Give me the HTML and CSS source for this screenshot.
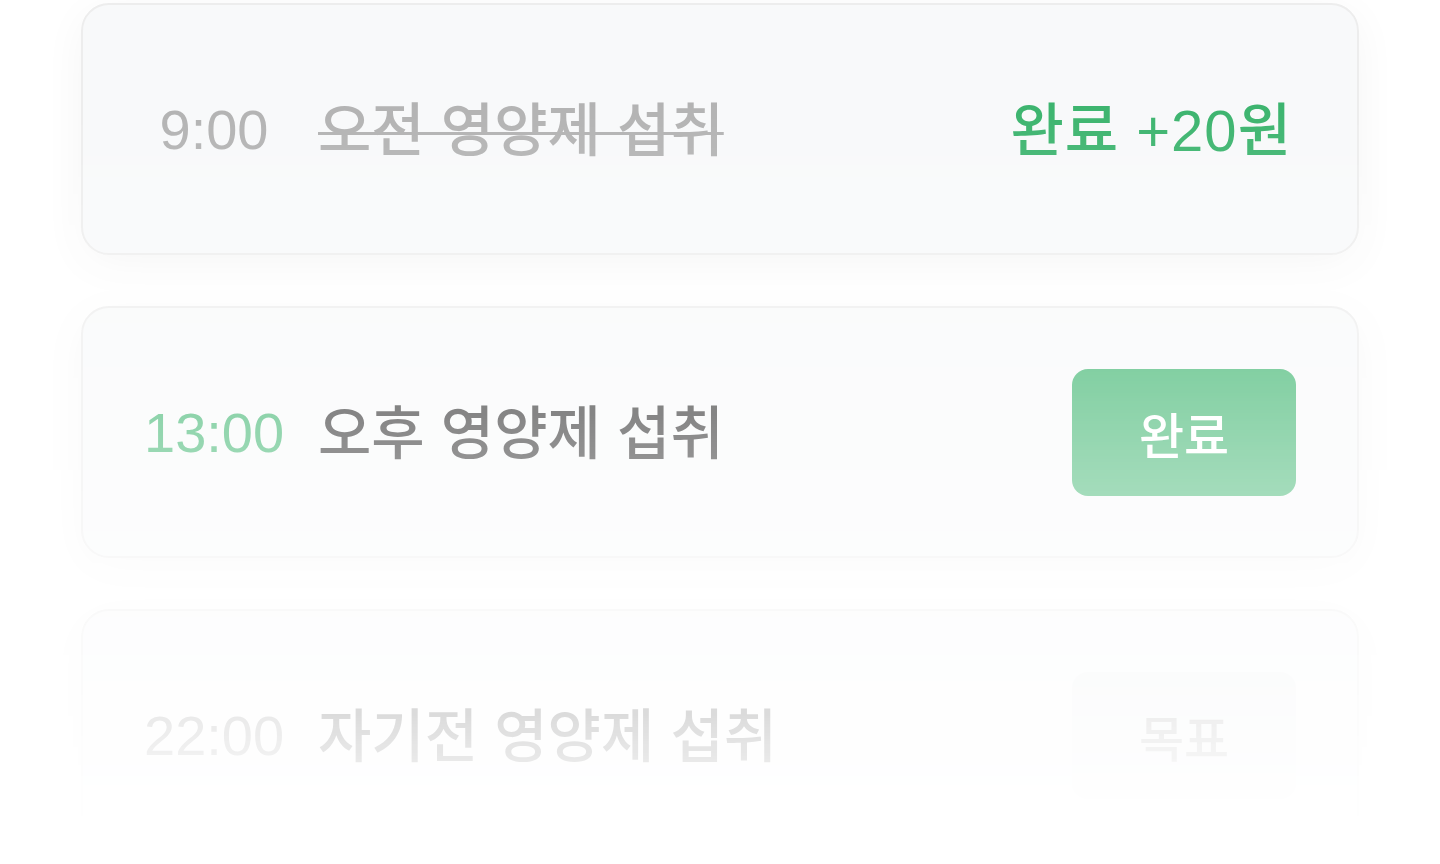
FILE: index.html
```html
<!DOCTYPE html>
<html lang="ko">
<head>
<meta charset="utf-8">
<title>영양제 체크리스트</title>
<link rel="stylesheet" href="styles.css">
</head>
<body>
<div class="list">
  <div class="card done">
    <span class="time">9:00</span>
    <span class="title">오전 영양제 섭취</span>
    <span class="reward">완료 +20원</span>
  </div>
  <div class="card current">
    <span class="time">13:00</span>
    <span class="title">오후 영양제 섭취</span>
    <button class="btn btn-done">완료</button>
  </div>
  <div class="card upcoming">
    <span class="time">22:00</span>
    <span class="title">자기전 영양제 섭취</span>
    <button class="btn btn-goal">목표</button>
  </div>
</div>
</body>
</html>
```
FILE: styles.css
```css
html, body {
  margin: 0;
  padding: 0;
  background: #ffffff;
  height: 100%;
  overflow: hidden;
}
body {
  font-family: "Liberation Sans", "Noto Sans CJK KR", sans-serif;
}
.list {
  display: flex;
  flex-direction: column;
  gap: 51px;
  padding: 3px 81px 0;
  -webkit-mask-image: linear-gradient(to bottom, #000 103px, transparent 838px);
  mask-image: linear-gradient(to bottom, #000 103px, transparent 838px);
}
.card {
  box-sizing: border-box;
  height: 252px;
  flex: none;
  display: flex;
  align-items: center;
  padding: 0 61px;
  background: #f8f9fa;
  border: 2px solid #ededed;
  border-radius: 28px;
  box-shadow: 0 10px 44px rgba(0, 0, 0, 0.045);
}
.time {
  width: 140px;
  flex: none;
  text-align: center;
  font-size: 56px;
  color: #808080;
}
.title {
  margin-left: 34px;
  font-size: 58px;
  font-weight: 500;
  color: #2c2c2c;
  flex: 1;
  white-space: nowrap;
  line-height: 1;
  padding-top: 4px;
}
.done .time,
.done .title {
  color: #b3b3b3;
}
.done .title {
  flex: none;
  text-decoration: line-through;
  text-decoration-thickness: 3px;
}
.reward {
  margin-left: auto;
  font-size: 58px;
  font-weight: 500;
  letter-spacing: 1px;
  color: #3cb46e;
  padding-right: 4px;
  white-space: nowrap;
  line-height: 1;
  padding-top: 4px;
}
.current .time {
  color: #3cb46e;
}
.btn {
  flex: none;
  width: 224px;
  height: 127px;
  border: none;
  border-radius: 16px;
  font-family: "Liberation Sans", "Noto Sans CJK KR", sans-serif;
  font-size: 49px;
  font-weight: 500;
  padding: 0;
}
.btn-done {
  background: #3cb46e;
  color: #ffffff;
}
.btn-goal {
  background: #eef0f2;
  color: #9e9e9e;
}
```
